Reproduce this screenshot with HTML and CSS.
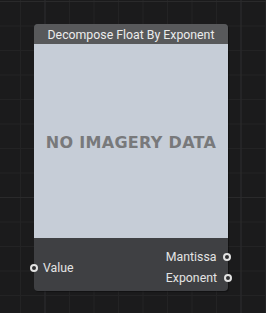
FILE: index.html
```html
<!DOCTYPE html>
<html>
<head>
<meta charset="utf-8">
<link rel="stylesheet" href="styles.css">
</head>
<body>
<div class="canvas">
  <div class="node">
    <div class="header">Decompose Float By Exponent</div>
    <div class="preview"><span class="noimg">NO IMAGERY DATA</span></div>
    <div class="pins">
      <div class="inputs">
        <div class="pin in"><span class="dot"></span><span class="label">Value</span></div>
      </div>
      <div class="outputs">
        <div class="pin out"><span class="label">Mantissa</span><span class="dot"></span></div>
        <div class="pin out"><span class="label">Exponent</span><span class="dot"></span></div>
      </div>
    </div>
  </div>
</div>
</body>
</html>
```
FILE: styles.css
```css
html, body {
  margin: 0;
  padding: 0;
}
body {
  width: 266px;
  height: 313px;
  overflow: hidden;
  background: #1b1b1c;
  font-family: Roboto, "Liberation Sans", sans-serif;
}
.canvas {
  width: 266px;
  height: 313px;
  box-sizing: border-box;
  padding: 24px 0 0 34px;
  background-color: #1b1b1c;
  background-image:
    linear-gradient(to right, #2a2a2b 0, #2a2a2b 1.5px, transparent 1.5px),
    linear-gradient(to bottom, #2a2a2b 0, #2a2a2b 1.5px, transparent 1.5px),
    linear-gradient(to right, #232324 0, #232324 1px, transparent 1px),
    linear-gradient(to bottom, #232324 0, #232324 1px, transparent 1px);
  background-size: 196px 196px, 196px 196px, 24.5px 24.5px, 24.5px 24.5px;
  background-position: 44.5px 1px, 44.5px 1px, 20px 1px, 20px 1px;
}
.node {
  width: 194px;
  border-radius: 4px;
  background: #3f4043;
  box-shadow: 1px 1px 1px rgba(0,0,0,0.35);
}
.header {
  height: 20px;
  background: #58595b;
  border-radius: 4px 4px 0 0;
  color: #ececec;
  font-size: 12.3px;
  line-height: 22px;
  text-align: center;
  white-space: nowrap;
}
.preview {
  height: 194px;
  background: #c6cdd7;
  display: flex;
  align-items: center;
  justify-content: center;
}
.noimg {
  font-family: "DejaVu Sans", sans-serif;
  font-weight: bold;
  font-size: 16px;
  color: #78797b;
  letter-spacing: 0.3px;
  position: relative;
  top: 1px;
  white-space: nowrap;
}
.pins {
  height: 53px;
  display: flex;
  justify-content: space-between;
  border-radius: 0 0 4px 4px;
}
.inputs {
  display: flex;
  flex-direction: column;
  justify-content: center;
  padding-top: 6px;
}
.outputs {
  display: flex;
  flex-direction: column;
  gap: 5px;
  padding-top: 11px;
}
.pin {
  display: flex;
  align-items: center;
  height: 16px;
  color: #e4e4e4;
  font-size: 12.3px;
}
.pin.in {
  margin-left: -4px;
}
.pin.in .label {
  margin-left: 5px;
}
.pin.out {
  margin-right: -4px;
}
.pin.out .label {
  margin-right: 7px;
}
.dot {
  width: 4px;
  height: 4px;
  border: 2px solid #e2e2e2;
  border-radius: 50%;
  background: #2e2e30;
}
```
